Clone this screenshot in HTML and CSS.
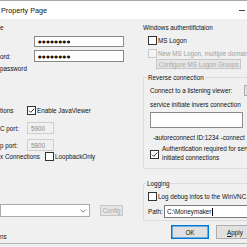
FILE: index.html
```html
<!DOCTYPE html>
<html>
<head>
<meta charset="utf-8">
<title>Property Page</title>
<link rel="stylesheet" href="styles.css">
</head>
<body>
<div class="window">
  <div class="titlebar">
    <span class="title">Property Page</span>
    <span class="min"></span>
  </div>
  <div class="content">
    <div class="col left">
      <div class="line l-e">e</div>
      <div class="row r-pw1"><span class="input pw">●●●●●●●●</span></div>
      <div class="row r-pw2"><span class="lbl w34">ord:</span><span class="input pw">●●●●●●●●</span></div>
      <div class="line l-pass">password</div>
      <div class="row r-java">
        <span class="lbl w27">tions</span>
        <span class="cb"><svg viewBox="0 0 7 7" width="7" height="7"><path d="M1 3.6 L2.8 5.4 L6.2 1.6" fill="none" stroke="#222" stroke-width="0.9"/></svg></span>
        <span class="cb-text">Enable JavaViewer</span>
      </div>
      <div class="row r-port1"><span class="lbl w27">C port:</span><span class="input port">5900</span></div>
      <div class="row r-port2"><span class="lbl w27">p port:</span><span class="input port">5800</span></div>
      <div class="row r-loop">
        <span class="lbl w45">x Connections</span>
        <span class="cb"></span>
        <span class="cb-text">LoopbackOnly</span>
      </div>
      <div class="row r-combo">
        <span class="combo"><svg class="chev" viewBox="0 0 6 4" width="6" height="4"><path d="M0.5 0.8 L3 3.2 L5.5 0.8" fill="none" stroke="#555" stroke-width="0.8"/></svg></span>
        <span class="btn disabled cfg">Config</span>
      </div>
      <div class="line l-ns">ns</div>
    </div>
    <div class="col right">
      <div class="line hdr">Windows authentifictaion</div>
      <div class="row r-ms">
        <span class="cb"></span>
        <span class="cb-text">MS Logon</span>
      </div>
      <div class="row r-newms">
        <span class="cb disabled"></span>
        <span class="cb-text dis">New MS Logon, multiple domains</span>
      </div>
      <div class="row r-groups"><span class="btn disabled groups">Configure MS Logon Groups</span></div>
      <fieldset class="group rev">
        <legend>Reverse connection</legend>
        <div class="row r-connect"><span class="connect-text">Connect to a listening viewer:</span><span class="btn small"></span></div>
        <div class="line l-service">service initiate invers connection</div>
        <div class="input rev-input"></div>
        <div class="line l-auto">-autoreconnect ID:1234 -connect</div>
        <div class="row r-auth">
          <span class="cb"><svg viewBox="0 0 7 7" width="7" height="7"><path d="M1 3.6 L2.8 5.4 L6.2 1.6" fill="none" stroke="#222" stroke-width="0.9"/></svg></span>
          <span class="auth-text">Authentication required for server<br>initiated connections</span>
        </div>
      </fieldset>
      <fieldset class="group log">
        <legend>Logging</legend>
        <div class="row r-debug">
          <span class="cb"></span>
          <span class="cb-text">Log debug infos to the WinVNC.log file</span>
        </div>
        <div class="row r-path"><span class="lbl w16">Path:</span><span class="input path">C:\Moneymaker<span class="caret"></span></span></div>
      </fieldset>
      <div class="row r-buttons">
        <span class="btn default">OK</span>
        <span class="btn"><u>A</u>pply</span>
      </div>
    </div>
  </div>
  <div class="bottom-edge"></div>
</div>
</body>
</html>
```

FILE: styles.css
```css
* { box-sizing: border-box; margin: 0; padding: 0; }

html, body {
  width: 247px;
  height: 247px;
  overflow: hidden;
}

body {
  background: #f0f0f0;
  font-family: "Liberation Sans", Arial, sans-serif;
  font-size: 6.3px;
  color: #111;
}

.window {
  width: 247px;
  height: 247px;
  display: flex;
  flex-direction: column;
}

.titlebar {
  height: 19px;
  flex: none;
  background: #fff;
  border-top: 1px solid #a8a8a8;
  display: flex;
  align-items: center;
  justify-content: space-between;
  padding: 0 2px 0 1px;
}

.title {
  font-size: 7.2px;
  color: #111;
}

.min {
  width: 6px;
  height: 1px;
  background: #444;
}

.content {
  height: 224px;
  flex: none;
  display: flex;
}

.bottom-edge {
  height: 1px;
  background: #b4b4b4;
}

.col {
  flex: none;
  display: flex;
  flex-direction: column;
  overflow: hidden;
}

.left { width: 143px; }
.right { width: 104px; }

.line {
  height: 9px;
  line-height: 9px;
  white-space: nowrap;
}

.row {
  display: flex;
  align-items: center;
  white-space: nowrap;
}

.lbl { flex: none; }
.w16 { width: 16px; }
.w27 { width: 27px; }
.w34 { width: 34px; }
.w45 { width: 45px; }

.input {
  background: #fff;
  border: 1px solid #8a8a8a;
  height: 100%;
  display: flex;
  align-items: center;
}

.pw {
  width: 90px;
  padding-left: 3px;
  font-family: "DejaVu Sans", sans-serif;
  font-size: 4px;
  letter-spacing: 0.6px;
  color: #111;
}

.port {
  width: 27px;
  background: #f0f0f0;
  border-color: #cfcfcf;
  color: #8a8a8a;
  padding-left: 3px;
}

.cb {
  flex: none;
  width: 9px;
  height: 9px;
  border: 1px solid #333;
  background: #fff;
  display: flex;
  align-items: center;
  justify-content: center;
}

.cb.disabled {
  border-color: #c8c8c8;
  background: #f4f4f4;
}

.cb-text { padding-left: 1px; }
.dis { color: #a2a2a2; }

.btn {
  flex: none;
  background: #e1e1e1;
  border: 1px solid #adadad;
  display: flex;
  align-items: center;
  justify-content: center;
  height: 100%;
}

.btn.disabled {
  background: #e6e6e6;
  border-color: #c6c6c6;
  color: #a8a8a8;
}

/* left column rows */
.l-e { margin-top: 4px; }
.r-pw1 { margin-top: 4px; height: 11px; padding-left: 34px; }
.r-pw2 { margin-top: 3px; height: 12px; }
.l-pass { margin-top: 2px; }
.r-java { margin-top: 33px; height: 9px; }
.r-port1 { margin-top: 7px; height: 12px; }
.r-port2 { margin-top: 5px; height: 12px; }
.r-loop { margin-top: 1px; height: 9px; }
.r-combo { margin-top: 43px; height: 13px; }
.l-ns { margin-top: 15px; }

.combo {
  width: 90px;
  height: 13px;
  background: #fff;
  border: 1px solid #ababab;
  display: flex;
  align-items: center;
  justify-content: flex-end;
  padding-right: 3px;
}

.cfg {
  width: 23px;
  height: 11px;
  margin-left: 10px;
}

/* right column rows */
.hdr { margin-top: 4px; }
.r-ms { margin-top: 4px; height: 9px; padding-left: 5px; }
.r-newms { margin-top: 4px; height: 9px; padding-left: 5px; }
.r-groups { margin-top: 1px; height: 10px; padding-left: 13px; }
.groups { width: 85px; }

.group {
  flex: none;
  width: 112px;
  border: 1px solid #dcdcdc;
  padding: 0 0 0 6px;
  min-width: 0;
}

.group legend {
  height: 9px;
  line-height: 9px;
  padding: 0 1px;
  margin-left: -3px;
}

.rev { margin-top: 4px; padding-bottom: 6px; }

.r-connect { margin-top: 4px; height: 9px; }
.connect-text { width: 94px; flex: none; }
.btn.small { width: 12px; height: 11px; }

.l-service { margin-top: 5px; }
.rev-input { margin-top: 3px; height: 16px; width: 93px; }
.l-auto { margin-top: 5px; padding-left: 3px; }

.r-auth { margin-top: 2px; height: 18px; }
.r-auth .cb { align-self: flex-end; margin-bottom: 3px; }
.auth-text { padding-left: 3px; line-height: 9px; }

.log { margin-top: 10px; padding: 0 0 2px 5px; }
.r-debug { margin-top: 4px; height: 9px; margin-left: -1px; }
.r-path { margin-top: 4px; height: 13px; margin-left: -1px; }
.path {
  width: 90px;
  padding-left: 2px;
  border-color: #7a7a7a;
}
.caret {
  width: 1px;
  height: 8px;
  background: #000;
  margin-left: 0.5px;
}

.r-buttons { margin-top: 4px; height: 14px; padding-left: 28px; gap: 7px; }
.r-buttons .btn { width: 38px; }
.btn.default { border-color: #0078d7; box-shadow: inset 0 0 0 0.5px #0078d7; }
```
